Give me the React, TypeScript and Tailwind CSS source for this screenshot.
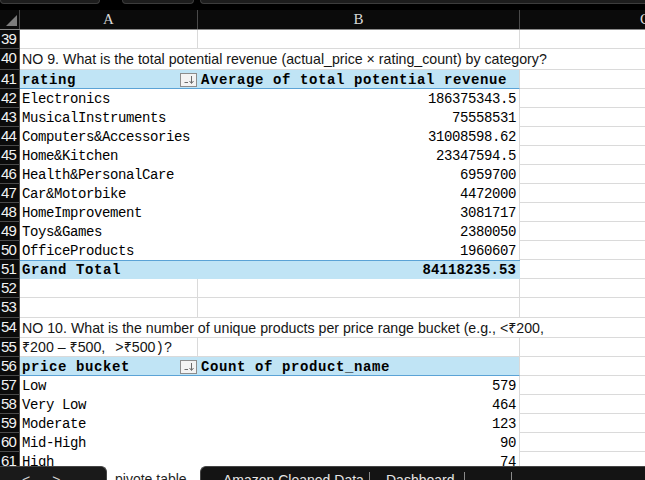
import type { ReactNode } from "react";

const GRID = "border-[#dadada]";

function RowNum({ n }: { n: number }) {
	return (
		<div className="w-[20px] shrink-0 border-r border-b border-[#4a4a4a] bg-[#0b0b0b] pl-[1px] font-['Liberation_Sans',sans-serif] text-[15px] leading-[18px] tracking-[-0.8px] text-[#f2f2f2]">
			{n}
		</div>
	);
}

function FilterButton() {
	return (
		<div className="mr-[1px] flex h-[14px] w-[17px] items-center justify-center border border-[#8c8c8c] bg-[#f3f3f3]">
			<svg width="13" height="10" viewBox="0 0 13 10">
				<line x1="2.5" y1="7.5" x2="6" y2="7.5" stroke="#6b6b6b" strokeWidth="1" />
				<line x1="9.5" y1="1" x2="9.5" y2="8" stroke="#6b6b6b" strokeWidth="1" />
				<path d="M7.5 6 L9.5 8.5 L11.5 6" fill="none" stroke="#6b6b6b" strokeWidth="1" />
			</svg>
		</div>
	);
}

function Row({
	n,
	h = "h-[19px]",
	children,
}: {
	n: number;
	h?: string;
	children: ReactNode;
}) {
	return (
		<div className={`flex ${h} w-[770px]`}>
			<RowNum n={n} />
			{children}
		</div>
	);
}

function EmptyRow({ n, h }: { n: number; h?: string }) {
	return (
		<Row n={n} h={h}>
			<div className={`w-[178px] border-r border-b ${GRID}`} />
			<div className={`w-[322px] border-r border-b ${GRID}`} />
			<div className={`flex-1 border-b ${GRID}`} />
		</Row>
	);
}

function TextRow({ n, h, children }: { n: number; h?: string; children: ReactNode }) {
	return (
		<Row n={n} h={h}>
			<div
				className={`flex-1 border-b ${GRID} pt-[1px] pl-[2px] font-['Liberation_Sans','Noto_Sans',sans-serif] text-[14.2px] leading-[19px] whitespace-nowrap text-[#151515]`}
			>
				{children}
			</div>
		</Row>
	);
}

function HeadRow({ n, a, b }: { n: number; a: string; b: string }) {
	return (
		<Row n={n}>
			<div className="flex w-[178px] items-center justify-between border-b border-[#5ba3d6] bg-[#c0e4f5] pt-[1px] pl-[2px] font-['Liberation_Mono',monospace] text-[14px] font-bold tracking-[0.6px] whitespace-nowrap">
				<span className="pt-[1px]">{a}</span>
				<FilterButton />
			</div>
			<div className={`w-[322px] border-r ${GRID} border-b border-b-[#5ba3d6] bg-[#c0e4f5] pt-[2px] pl-[3px] font-['Liberation_Mono',monospace] text-[14px] leading-[16px] font-bold tracking-[0.6px] whitespace-nowrap`}>
				{b}
			</div>
			<div className={`flex-1 border-b ${GRID}`} />
		</Row>
	);
}

function DataRow({ n, a, b }: { n: number; a: string; b: string }) {
	return (
		<Row n={n}>
			<div className="w-[178px] pt-[2px] pl-[2px] font-['Liberation_Mono',monospace] text-[14px] leading-[17px] tracking-[-0.4px] whitespace-nowrap text-black">
				{a}
			</div>
			<div className={`w-[322px] border-r ${GRID} pt-[2px] pr-[3px] text-right font-['Liberation_Mono',monospace] text-[14px] leading-[17px] tracking-[-0.4px] text-black`}>
				{b}
			</div>
			<div className={`flex-1 border-b ${GRID}`} />
		</Row>
	);
}

function TotalRow({ n, a, b }: { n: number; a: string; b: string }) {
	return (
		<Row n={n}>
			<div className="w-[178px] border-t border-[#5ba3d6] bg-[#c0e4f5] pt-[1px] pl-[2px] font-['Liberation_Mono',monospace] text-[14px] leading-[17px] font-bold tracking-[0.6px]">
				{a}
			</div>
			<div className="w-[322px] border-t border-[#5ba3d6] bg-[#c0e4f5] pt-[1px] pr-[4px] text-right font-['Liberation_Mono',monospace] text-[14px] leading-[17px] font-bold tracking-[0.1px]">
				{b}
			</div>
			<div className={`flex-1 border-b ${GRID}`} />
		</Row>
	);
}

const revenue = [
	["Electronics", "186375343.5"],
	["MusicalInstruments", "75558531"],
	["Computers&Accessories", "31008598.62"],
	["Home&Kitchen", "23347594.5"],
	["Health&PersonalCare", "6959700"],
	["Car&Motorbike", "4472000"],
	["HomeImprovement", "3081717"],
	["Toys&Games", "2380050"],
	["OfficeProducts", "1960607"],
];

const buckets = [
	["Low", "579"],
	["Very Low", "464"],
	["Moderate", "123"],
	["Mid-High", "90"],
	["High", "74"],
];

export default function App() {
	return (
		<div className="flex h-[480px] w-[645px] flex-col overflow-hidden bg-white">
			{/* top chrome */}
			<div className="h-[10px] shrink-0 bg-black">
				<div className="flex items-start">
					<div className="h-[4px] w-[100px] rounded-b-[5px] border border-t-0 border-[#3c3c3c] bg-[#1d1d1d]" />
					<div className="ml-[22px] h-[4px] w-[72px] rounded-b-[5px] border border-t-0 border-[#3c3c3c] bg-[#1d1d1d]" />
					<div className="ml-[6px] h-[4px] flex-1 rounded-bl-[5px] border border-t-0 border-r-0 border-[#3c3c3c] bg-[#1d1d1d]" />
				</div>
			</div>
			<div className="flex h-[20px] w-[770px] shrink-0 border-b border-[#8a8a8a] bg-[#0b0b0b] font-['Liberation_Serif',serif] text-[15px] leading-[19px] text-[#d8d8d8]">
				<div className="relative w-[20px] border-r border-[#4a4a4a]">
					<svg className="absolute top-[5px] left-[6px]" width="11" height="11" viewBox="0 0 11 11">
						<path d="M11 0 L11 11 L0 11 Z" fill="#7d7d7d" />
					</svg>
				</div>
				<div className="w-[178px] border-r border-[#4a4a4a] text-center">A</div>
				<div className="w-[322px] border-r border-[#4a4a4a] text-center">B</div>
				<div className="flex-1 text-center">C</div>
			</div>

			{/* sheet */}
			<div className="min-h-0 flex-1 overflow-hidden">
				<EmptyRow n={39} />
				<TextRow n={40} h="h-[21px]">
					NO 9. What is the total potential revenue (actual_price × rating_count) by category?
				</TextRow>
				<HeadRow n={41} a="rating" b="Average of total potential revenue" />
				{revenue.map(([a, b], i) => (
					<DataRow key={a} n={42 + i} a={a} b={b} />
				))}
				<TotalRow n={51} a="Grand Total" b="84118235.53" />
				<EmptyRow n={52} />
				<EmptyRow n={53} h="h-[20px]" />
				<TextRow n={54} h="h-[20px]">
					NO 10. What is the number of unique products per price range bucket (e.g., &lt;₹200,
				</TextRow>
				<Row n={55}>
					<div className={`w-[178px] border-r border-b ${GRID} pt-[1px] pl-[2px] font-['Liberation_Sans','Noto_Sans',sans-serif] text-[14.2px] leading-[17px] whitespace-nowrap text-[#151515]`}>
						₹200 – ₹500,
						<span className="ml-[10px] font-['Liberation_Mono',monospace] text-[14px]">&gt;</span>₹500
						<span className="font-['Liberation_Mono',monospace] text-[14px]">)?</span>
					</div>
					<div className={`w-[322px] border-r border-b ${GRID}`} />
					<div className={`flex-1 border-b ${GRID}`} />
				</Row>
				<HeadRow n={56} a="price bucket" b="Count of product_name" />
				{buckets.map(([a, b], i) => (
					<DataRow key={a} n={57 + i} a={a} b={b} />
				))}
			</div>

			{/* sheet tabs */}
			<div className="flex h-[14px] shrink-0 overflow-hidden bg-white font-['Liberation_Sans',sans-serif] text-[14px] leading-[18px]">
				<div className="flex w-[107px] gap-[22px] rounded-tr-[6px] border-t border-r border-[#454545] bg-[#1a1a1a] pt-[4px] pl-[22px] text-[#cfcfcf]">
					<span>&lt;</span>
					<span>&gt;</span>
				</div>
				<div className="w-[93px] pt-[4px] pl-[8px] whitespace-nowrap text-[#1f1f1f]">pivote table</div>
				<div className="flex flex-1 items-start rounded-tl-[6px] border-t border-l border-[#454545] bg-[#141414] pt-[4px] whitespace-nowrap text-[#e6e6e6]">
					<span className="w-[168px] pl-[22px]">Amazon Cleaned Data</span>
					<span className="mt-[1px] h-[10px] w-px bg-[#8a8a8a]" />
					<span className="w-[94px] pl-[16px]">Dashboard</span>
					<span className="mt-[1px] h-[10px] w-px bg-[#8a8a8a]" />
					<span className="w-[46px]" />
					<span className="mt-[1px] h-[10px] w-px bg-[#8a8a8a]" />
				</div>
			</div>
		</div>
	);
}
